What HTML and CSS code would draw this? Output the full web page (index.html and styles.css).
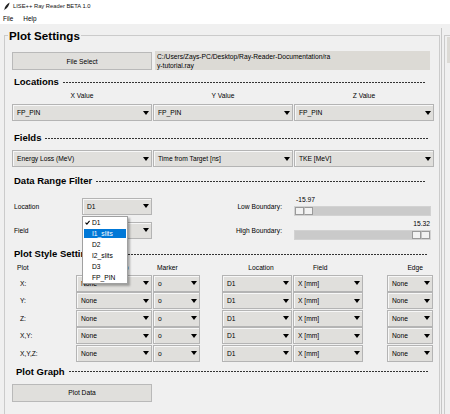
FILE: index.html
```html
<!DOCTYPE html>
<html>
<head>
<meta charset="utf-8">
<title>LISE++ Ray Reader BETA 1.0</title>
<link rel="stylesheet" href="styles.css">
</head>
<body>
<div class="titlebar">
  <svg class="app-icon" viewBox="0 0 7 9" width="7" height="9"><path d="M0.6 8.6 L1.4 7.4 C1.6 4.8 3.4 2 6.6 0.4 C6.2 3.2 4.6 6 1.9 7.6 Z" fill="#222"/></svg>
  <span>LISE++ Ray Reader BETA 1.0</span>
</div>
<div class="menubar"><span>File</span><span>Help</span></div>

<div class="workspace">
  <fieldset class="settings">
    <legend>Plot Settings</legend>
    <div class="frame-body">
      <div class="file-row">
        <div class="btn file-btn">File Select</div>
        <div class="path">C:/Users/Zays-PC/Desktop/Ray-Reader-Documentation/ra<br>y-tutorial.ray</div>
      </div>

      <div class="section s-locations"><h2>Locations</h2><span class="dash"></span></div>
      <div class="grid3 col-labels"><span>X Value</span><span>Y Value</span><span>Z Value</span></div>
      <div class="grid3">
        <div class="combo"><span>FP_PIN</span><i class="arrow"></i></div>
        <div class="combo"><span>FP_PIN</span><i class="arrow"></i></div>
        <div class="combo"><span>FP_PIN</span><i class="arrow"></i></div>
      </div>

      <div class="section s-fields"><h2>Fields</h2><span class="dash"></span></div>
      <div class="grid3 field-combos">
        <div class="combo"><span>Energy Loss (MeV)</span><i class="arrow"></i></div>
        <div class="combo"><span>Time from Target [ns]</span><i class="arrow"></i></div>
        <div class="combo"><span>TKE [MeV]</span><i class="arrow"></i></div>
      </div>

      <div class="section s-range"><h2>Data Range Filter</h2><span class="dash"></span></div>
      <div class="range-grid">
        <span class="range-label">Location</span>
        <div class="combo has-popup"><span>D1</span><i class="arrow"></i>
          <ul class="popup">
            <li class="checked"><svg class="check" viewBox="0 0 5 5" width="5" height="5"><path d="M0.5 2.6 L1.9 4.1 L4.6 0.9" fill="none" stroke="#000" stroke-width="1.1"/></svg>D1</li>
            <li class="active">I1_slits</li>
            <li>D2</li>
            <li>I2_slits</li>
            <li>D3</li>
            <li>FP_PIN</li>
          </ul>
        </div>
        <span class="bound-label">Low Boundary:</span>
        <div class="scale">
          <div class="scale-value start">-15.97</div>
          <div class="trough"><span class="handle"><i></i><i></i></span></div>
        </div>

        <span class="range-label">Field</span>
        <div class="combo"><span></span><i class="arrow"></i></div>
        <span class="bound-label">High Boundary:</span>
        <div class="scale">
          <div class="scale-value end">15.32</div>
          <div class="trough end"><span class="handle"><i></i><i></i></span></div>
        </div>
      </div>

      <div class="section s-style"><h2>Plot Style Settings</h2><span class="dash"></span></div>
      <div class="style-grid">
        <span class="hdr h-plot">Plot</span>
        <span class="hdr h-cmap">Colormap</span>
        <span class="hdr h-marker">Marker</span>
        <span></span>
        <span class="hdr h-loc">Location</span>
        <span class="hdr h-field">Field</span>
        <span></span>
        <span class="hdr h-edge">Edge</span>

        <span class="row-label">X:</span>
        <div class="combo"><span>None</span><i class="arrow"></i></div>
        <div class="combo"><span>o</span><i class="arrow"></i></div>
        <span></span>
        <div class="combo"><span>D1</span><i class="arrow"></i></div>
        <div class="combo"><span>X [mm]</span><i class="arrow"></i></div>
        <span></span>
        <div class="combo"><span>None</span><i class="arrow"></i></div>

        <span class="row-label">Y:</span>
        <div class="combo"><span>None</span><i class="arrow"></i></div>
        <div class="combo"><span>o</span><i class="arrow"></i></div>
        <span></span>
        <div class="combo"><span>D1</span><i class="arrow"></i></div>
        <div class="combo"><span>X [mm]</span><i class="arrow"></i></div>
        <span></span>
        <div class="combo"><span>None</span><i class="arrow"></i></div>

        <span class="row-label">Z:</span>
        <div class="combo"><span>None</span><i class="arrow"></i></div>
        <div class="combo"><span>o</span><i class="arrow"></i></div>
        <span></span>
        <div class="combo"><span>D1</span><i class="arrow"></i></div>
        <div class="combo"><span>X [mm]</span><i class="arrow"></i></div>
        <span></span>
        <div class="combo"><span>None</span><i class="arrow"></i></div>

        <span class="row-label">X,Y:</span>
        <div class="combo"><span>None</span><i class="arrow"></i></div>
        <div class="combo"><span>o</span><i class="arrow"></i></div>
        <span></span>
        <div class="combo"><span>D1</span><i class="arrow"></i></div>
        <div class="combo"><span>X [mm]</span><i class="arrow"></i></div>
        <span></span>
        <div class="combo"><span>None</span><i class="arrow"></i></div>

        <span class="row-label">X,Y,Z:</span>
        <div class="combo"><span>None</span><i class="arrow"></i></div>
        <div class="combo"><span>o</span><i class="arrow"></i></div>
        <span></span>
        <div class="combo"><span>D1</span><i class="arrow"></i></div>
        <div class="combo"><span>X [mm]</span><i class="arrow"></i></div>
        <span></span>
        <div class="combo"><span>None</span><i class="arrow"></i></div>
      </div>

      <div class="section s-graph"><h2>Plot Graph</h2><span class="dash"></span></div>
      <div class="btn plot-btn">Plot Data</div>
    </div>
  </fieldset>
  <div class="divider"></div>
  <div class="plot-frame"><div class="plot-toolbar"></div></div>
</div>
</body>
</html>
```

FILE: styles.css
```css
* { box-sizing: border-box; }
html, body { margin: 0; padding: 0; }
body {
  width: 450px;
  height: 414px;
  overflow: hidden;
  background: #f0f0f0;
  font-family: "Liberation Sans", Arial, sans-serif;
  font-size: 6.7px;
  color: #000;
}

.titlebar {
  height: 12px;
  background: #fff;
  display: flex;
  align-items: center;
  gap: 3px;
  padding-left: 3px;
  font-size: 5.8px;
  color: #111;
}
.app-icon { display: block; }

.menubar {
  height: 12px;
  background: #fff;
  display: flex;
  align-items: center;
  gap: 10px;
  padding-left: 3px;
  font-size: 6.4px;
}

.workspace {
  display: flex;
  align-items: flex-start;
  padding: 4px 0 0 4px;
  height: 390px;
  overflow: hidden;
}

.settings {
  margin: 0;
  padding: 0;
  width: 436px;
  min-width: 0;
  height: 400px;
  flex: none;
  border: 1px solid #cbcbcb;
}
.settings legend {
  font-family: "Liberation Sans", Arial, sans-serif;
  font-weight: bold;
  font-size: 11.6px;
  line-height: 15px;
  margin-left: 3px;
  padding: 0 1px;
}
.frame-body { padding: 8px 6px 0 7px; }

.btn {
  background: #e0dfdc;
  border: 1px solid #b9b9b9;
  display: flex;
  align-items: center;
  justify-content: center;
}

.file-row {
  display: grid;
  grid-template-columns: 140px 1fr;
  column-gap: 3px;
  height: 19px;
}
.file-btn { margin-top: 1px; height: 18px; }
.path {
  background: #dcdad5;
  margin-right: 3px;
  padding: 1px 2px 0;
  line-height: 9px;
}

.section {
  display: flex;
  align-items: center;
  gap: 4px;
  height: 14px;
  padding-left: 2px;
  padding-right: 6px;
}
.section h2 {
  margin: 0;
  font-size: 9.5px;
  line-height: 14px;
  font-weight: bold;
  white-space: nowrap;
}
.dash {
  flex: 1;
  height: 1px;
  background: repeating-linear-gradient(90deg, #333 0 2px, transparent 2px 3px);
}
.s-locations { margin-top: 5px; padding-right: 8px; }
.s-fields { margin-top: 10px; padding-right: 5px; }
.s-range { margin-top: 7px; padding-right: 8px; }
.s-style { margin-top: 6px; padding-right: 5px; }
.s-graph { margin-top: 3px; padding-left: 4px; padding-right: 4px; }

.grid3 {
  display: grid;
  grid-template-columns: 140px 140px 140px;
  column-gap: 1px;
}
.col-labels {
  height: 14px;
  margin-bottom: 1px;
  line-height: 14px;
  text-align: center;
}
.field-combos { margin-top: 5px; }

.combo {
  position: relative;
  height: 17px;
  background: #e0dfdc;
  border: 1px solid #b4b4b4;
  box-shadow: inset 1px 1px 0 #f7f7f7;
  display: flex;
  align-items: center;
  justify-content: space-between;
  padding: 0 2px 0 4px;
  white-space: nowrap;
}
.arrow {
  display: block;
  width: 0;
  height: 0;
  border-left: 3.5px solid transparent;
  border-right: 3.5px solid transparent;
  border-top: 4px solid #000;
}

.range-grid {
  margin-top: 7px;
  display: grid;
  grid-template-columns: 70px 70px 1fr 137px;
  grid-template-rows: 22px 22px;
  row-gap: 2px;
  margin-right: 2px;
  align-items: center;
}
.range-label { padding-left: 2px; }
.bound-label { text-align: right; padding-right: 12px; }

.scale { align-self: start; }
.scale-value { height: 10px; line-height: 10px; }
.scale-value.start { padding-left: 2px; }
.scale-value.end { text-align: right; padding-right: 1px; }
.trough {
  margin-top: 1px;
  height: 10px;
  background: #cacaca;
  border: 1px solid #d2d2d2;
  display: flex;
  justify-content: flex-start;
}
.trough.end { justify-content: flex-end; }
.handle { display: flex; height: 100%; }
.handle i {
  display: block;
  width: 9px;
  height: 100%;
  background: #f2f2f2;
  border: 1px solid #9a9a9a;
}
.handle i + i { border-left: 1px solid #c4c4c4; }

.popup {
  position: absolute;
  left: -1px;
  top: 17px;
  width: 46px;
  margin: 0;
  padding: 0 1px;
  list-style: none;
  background: #fff;
  border: 1px solid #a0a0a0;
  box-shadow: 2px 2px 2px rgba(0, 0, 0, 0.3);
  z-index: 10;
}
.popup li {
  position: relative;
  height: 11px;
  line-height: 11px;
  padding-left: 8px;
}
.popup li.active {
  color: #fff;
  background: linear-gradient(#0078d7, #0078d7) 0 1px / 100% 9px no-repeat;
}
.check { position: absolute; left: 1px; top: 3px; }

.style-grid {
  display: grid;
  grid-template-columns: 63px 76px 47px 20px 70px 70px 22px 46px;
  grid-template-rows: 13px repeat(5, 17px);
  column-gap: 1px;
  row-gap: 0.5px;
  align-items: center;
}
.h-plot { padding-left: 5px; }
.h-cmap { text-align: center; }
.h-marker { padding-left: 4px; }
.h-loc { text-align: center; padding-left: 8px; }
.h-field { padding-left: 20px; }
.h-edge { text-align: right; padding-right: 10px; }
.row-label { padding-left: 8px; }

.plot-btn { margin-top: 5px; width: 140px; height: 18px; }

.divider {
  flex: none;
  width: 1px;
  height: 400px;
  margin-left: 1px;
  background: #c6c6c6;
}
.plot-frame {
  flex: 1;
  margin-left: 2px;
  margin-top: 7px;
  height: 400px;
  border-left: 1px solid #cbcbcb;
  border-top: 1px solid #cbcbcb;
  padding: 1px 0 0 2px;
}
.plot-toolbar { height: 26px; background: #dcdad5; }
```
